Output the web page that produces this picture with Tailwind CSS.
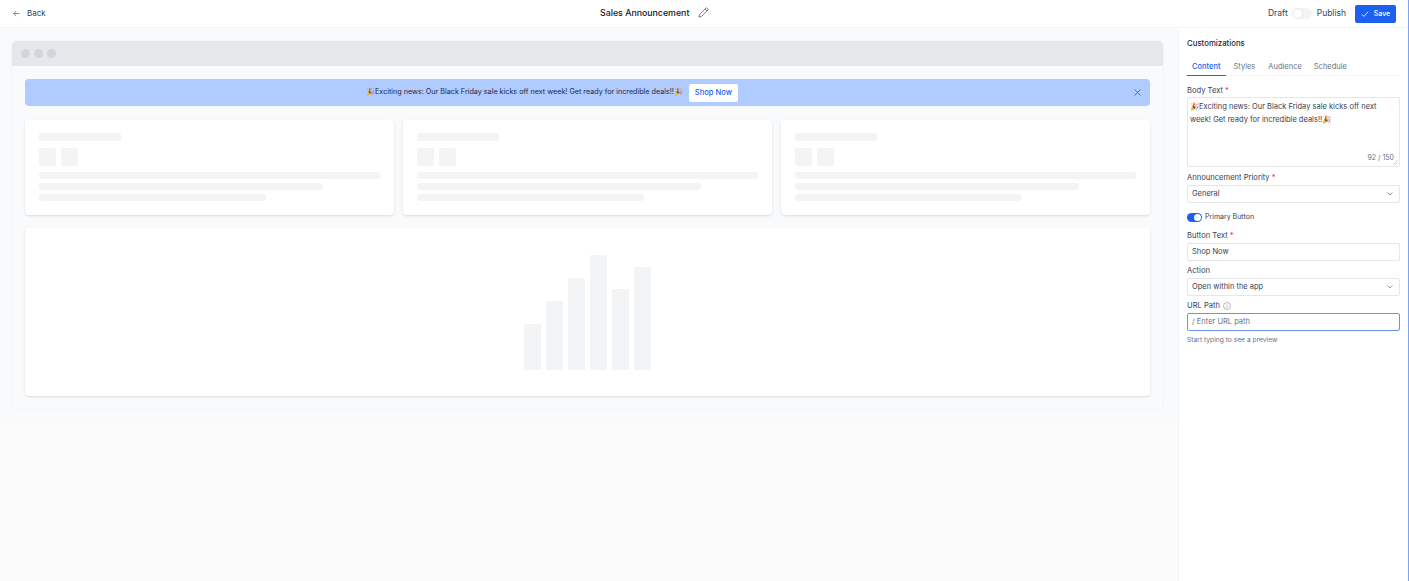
<!DOCTYPE html>
<html><head><meta charset="utf-8">
<script src="https://cdn.jsdelivr.net/npm/@tailwindcss/browser@4"></script>
</head>
<body class="bg-white">
<div class="h-[581px] w-[1409px] overflow-hidden flex flex-col font-['Inter','Liberation_Sans',sans-serif] bg-white">
  <div class="flex-1 flex min-h-0">
  <div class="w-[1408px] shrink-0 flex flex-col">
  <header class="h-[28px] shrink-0 flex items-center border-b border-gray-100 pl-[13px] pr-[12px] relative">
    <div class="flex items-center gap-[7px] text-[8px] leading-[10px] text-gray-700 pb-[1px]">
      <svg class="w-[7px] h-[7px]" viewBox="0 0 10 10" fill="none" stroke="#4b5563" stroke-width="1"><path d="M9 5H1.500M4.500 1.500 1 5l3.500 3.500"/></svg>
      <span>Back</span>
    </div>
    <div class="absolute left-[600px] top-[6px] flex items-center gap-[9px]">
      <span class="text-[8.8px] leading-[13px] font-medium text-gray-900">Sales Announcement</span>
      <svg class="w-[11px] h-[11px]" viewBox="0 0 12 12" fill="none" stroke="#4b5563" stroke-width="0.8"><path d="M1 11l.7-2.800L8.700 1.200a1 1 0 0 1 1.400 0l.7.7a1 1 0 0 1 0 1.400L3.800 10.300 1 11ZM7.700 2.200l2.100 2.100"/></svg>
    </div>
    <div class="ml-auto flex items-center">
      <span class="text-[8.5px] text-gray-700 mr-[4px]">Draft</span>
      <div class="w-[20px] h-[11px] rounded-full bg-gray-100 relative mr-[5px]"><div class="absolute left-0 top-0 w-[11px] h-[11px] rounded-full bg-white border border-gray-200"></div></div>
      <span class="text-[8.5px] text-gray-700 mr-[9px]">Publish</span>
      <button class="w-[41px] h-[18px] rounded-[2px] bg-[#1d5ff0] text-white text-[7px] leading-[18px] font-medium flex items-center justify-center gap-[5px]">
        <svg class="w-[8px] h-[8px]" viewBox="0 0 10 10" fill="none" stroke="white" stroke-width="1"><path d="M1 5.500 3.800 8 9 2"/></svg><span class="pt-[1px]">Save</span>
      </button>
    </div>
  </header>
  <div class="flex-1 flex min-h-0">
    <main class="w-[1178px] shrink-0 bg-[#fbfbfc] flex flex-col">
      <div class="bg-[#f9fafb] pt-[12px] pl-[11px] pr-[14px] pb-[14px]">
        <div class="h-[370px] rounded-[6px] border border-gray-100 overflow-hidden flex flex-col">
          <div class="h-[25px] shrink-0 bg-gray-200 flex items-center gap-[4px] pl-[9px]">
            <span class="w-[9px] h-[9px] rounded-full bg-gray-300"></span><span class="w-[9px] h-[9px] rounded-full bg-gray-300"></span><span class="w-[9px] h-[9px] rounded-full bg-gray-300"></span>
          </div>
          <div class="flex-1 px-[13px] pt-[13px] flex flex-col">
            <div class="h-[27px] shrink-0 rounded-[4px] bg-[#b0cbff] flex items-center justify-center relative pr-[71px]">
              <span class="text-[7.2px] text-gray-800">🎉Exciting news: Our Black Friday sale kicks off next week! Get ready for incredible deals!!🎉</span>
              <span class="ml-[6px] w-[49px] h-[18px] rounded-[2px] bg-white text-[#1d5ff0] text-[7.6px] font-medium flex items-center justify-center">Shop Now</span>
              <svg class="absolute right-[9px] top-[10px] w-[7px] h-[7px]" viewBox="0 0 8 8" stroke="#4b5563" stroke-width="0.9"><path d="M.5.5l7 7M7.500.5l-7 7"/></svg>
            </div>
            <div class="grid grid-cols-3 gap-[9.500px] mt-[14px]">
              <div class="h-[95px] rounded-[4px] bg-white shadow-sm px-[14px] pt-[13px] flex flex-col">
                <div class="h-[8px] w-[82px] rounded-[2px] bg-gray-100"></div>
                <div class="flex gap-[5px] mt-[7px]"><div class="w-[17px] h-[18px] rounded-[2px] bg-gray-100"></div><div class="w-[17px] h-[18px] rounded-[2px] bg-gray-100"></div></div>
                <div class="h-[7px] mt-[6px] rounded-[3px] bg-gray-100"></div>
                <div class="h-[7px] mt-[4px] w-10/12 rounded-[3px] bg-gray-100"></div>
                <div class="h-[7px] mt-[4px] w-8/12 rounded-[3px] bg-gray-100"></div>
              </div>
              <div class="h-[95px] rounded-[4px] bg-white shadow-sm px-[14px] pt-[13px] flex flex-col">
                <div class="h-[8px] w-[82px] rounded-[2px] bg-gray-100"></div>
                <div class="flex gap-[5px] mt-[7px]"><div class="w-[17px] h-[18px] rounded-[2px] bg-gray-100"></div><div class="w-[17px] h-[18px] rounded-[2px] bg-gray-100"></div></div>
                <div class="h-[7px] mt-[6px] rounded-[3px] bg-gray-100"></div>
                <div class="h-[7px] mt-[4px] w-10/12 rounded-[3px] bg-gray-100"></div>
                <div class="h-[7px] mt-[4px] w-8/12 rounded-[3px] bg-gray-100"></div>
              </div>
              <div class="h-[95px] rounded-[4px] bg-white shadow-sm px-[14px] pt-[13px] flex flex-col">
                <div class="h-[8px] w-[82px] rounded-[2px] bg-gray-100"></div>
                <div class="flex gap-[5px] mt-[7px]"><div class="w-[17px] h-[18px] rounded-[2px] bg-gray-100"></div><div class="w-[17px] h-[18px] rounded-[2px] bg-gray-100"></div></div>
                <div class="h-[7px] mt-[6px] rounded-[3px] bg-gray-100"></div>
                <div class="h-[7px] mt-[4px] w-10/12 rounded-[3px] bg-gray-100"></div>
                <div class="h-[7px] mt-[4px] w-8/12 rounded-[3px] bg-gray-100"></div>
              </div>
            </div>
            <div class="h-[168px] mt-[13px] rounded-[4px] bg-white shadow-sm flex items-end justify-center gap-[5px] pb-[26px]">
              <div class="w-[17px] h-[46px] rounded-[1px] bg-gray-100"></div>
              <div class="w-[17px] h-[69px] rounded-[1px] bg-gray-100"></div>
              <div class="w-[17px] h-[92px] rounded-[1px] bg-gray-100"></div>
              <div class="w-[17px] h-[115px] rounded-[1px] bg-gray-100"></div>
              <div class="w-[17px] h-[81px] rounded-[1px] bg-gray-100"></div>
              <div class="w-[17px] h-[103px] rounded-[1px] bg-gray-100"></div>
            </div>
          </div>
        </div>
      </div>
    </main>
    <aside class="flex-1 bg-white border-l border-gray-100 pl-[8px] pr-[8px] pt-[10px] text-[7.600px] text-gray-700">
      <div class="text-[7.800px] leading-[11px] font-medium text-gray-800">Customizations</div>
      <div class="flex border-b border-gray-100 mt-[9px] h-[18px] text-[7.500px] leading-[17px] text-gray-500">
        <span class="px-[5px] h-[18px] border-b border-[#1d5ff0] text-[#1d5ff0] font-medium">Content</span>
        <span class="ml-[8px]">Styles</span><span class="ml-[13px]">Audience</span><span class="ml-[12px]">Schedule</span>
      </div>
      <div class="mt-[9px] leading-[11px]">Body Text <span class="text-red-500">*</span></div>
      <div class="mt-[1px] h-[70px] rounded-[2px] border border-gray-200 px-[2px] pt-[3px] text-[7.500px] leading-[12.500px] relative">🎉Exciting news: Our Black Friday sale kicks off next week! Get ready for incredible deals!!🎉
        <span class="absolute right-[5px] bottom-[4px] text-[7px] leading-[9px] text-gray-500">92 / 150</span>
        <svg class="absolute right-[1px] bottom-[1px] w-[5px] h-[5px]" viewBox="0 0 5 5" stroke="#9ca3af" stroke-width="0.5"><path d="M0 5 5 0M2.500 5 5 2.500"/></svg>
      </div>
      <div class="mt-[5px] leading-[11px]">Announcement Priority <span class="text-red-500">*</span></div>
      <div class="mt-[2px] h-[18px] rounded-[2px] border border-gray-200 px-[4px] flex items-center justify-between text-[7.500px]">General<svg class="w-[6px] h-[4px] mr-[2px]" viewBox="0 0 6 4" fill="none" stroke="#6b7280" stroke-width="0.7"><path d="M.5.5 3 3 5.500.5"/></svg></div>
      <div class="mt-[6px] h-[16px] flex items-center gap-[3px]">
        <div class="w-[15px] h-[9px] rounded-full bg-[#1d5ff0] relative"><div class="absolute right-[1px] top-[1px] w-[7px] h-[7px] rounded-full bg-white"></div></div>
        <span class="text-[7px]">Primary Button</span>
      </div>
      <div class="mt-[5px] leading-[11px]">Button Text <span class="text-red-500">*</span></div>
      <div class="mt-[2px] h-[18px] rounded-[2px] border border-gray-200 px-[4px] flex items-center text-[7.500px]">Shop Now</div>
      <div class="mt-[4px] leading-[11px]">Action</div>
      <div class="mt-[2px] h-[18px] rounded-[2px] border border-gray-200 px-[4px] flex items-center justify-between text-[7.500px]">Open within the app<svg class="w-[6px] h-[4px] mr-[2px]" viewBox="0 0 6 4" fill="none" stroke="#6b7280" stroke-width="0.7"><path d="M.5.5 3 3 5.500.5"/></svg></div>
      <div class="mt-[4px] leading-[11px] flex items-center gap-[3px]">URL Path <svg class="w-[8px] h-[8px]" viewBox="0 0 8 8" fill="none" stroke="#6b7280" stroke-width="0.5"><circle cx="4" cy="4" r="3.500"/><path d="M4 3.500V6M4 2v.6"/></svg></div>
      <div class="mt-[2px] h-[18px] rounded-[2px] border border-[#6b93ea] px-[4px] flex items-center text-[7.500px] text-gray-500">/ Enter URL path</div>
      <div class="mt-[5px] text-[6.700px] leading-[9px] text-gray-500">Start typing to see a preview</div>
    </aside>
  </div>
  </div>
  <div class="w-[1px] shrink-0 bg-[#7aa5f2]"></div>
  </div>
</div>
</body></html>
